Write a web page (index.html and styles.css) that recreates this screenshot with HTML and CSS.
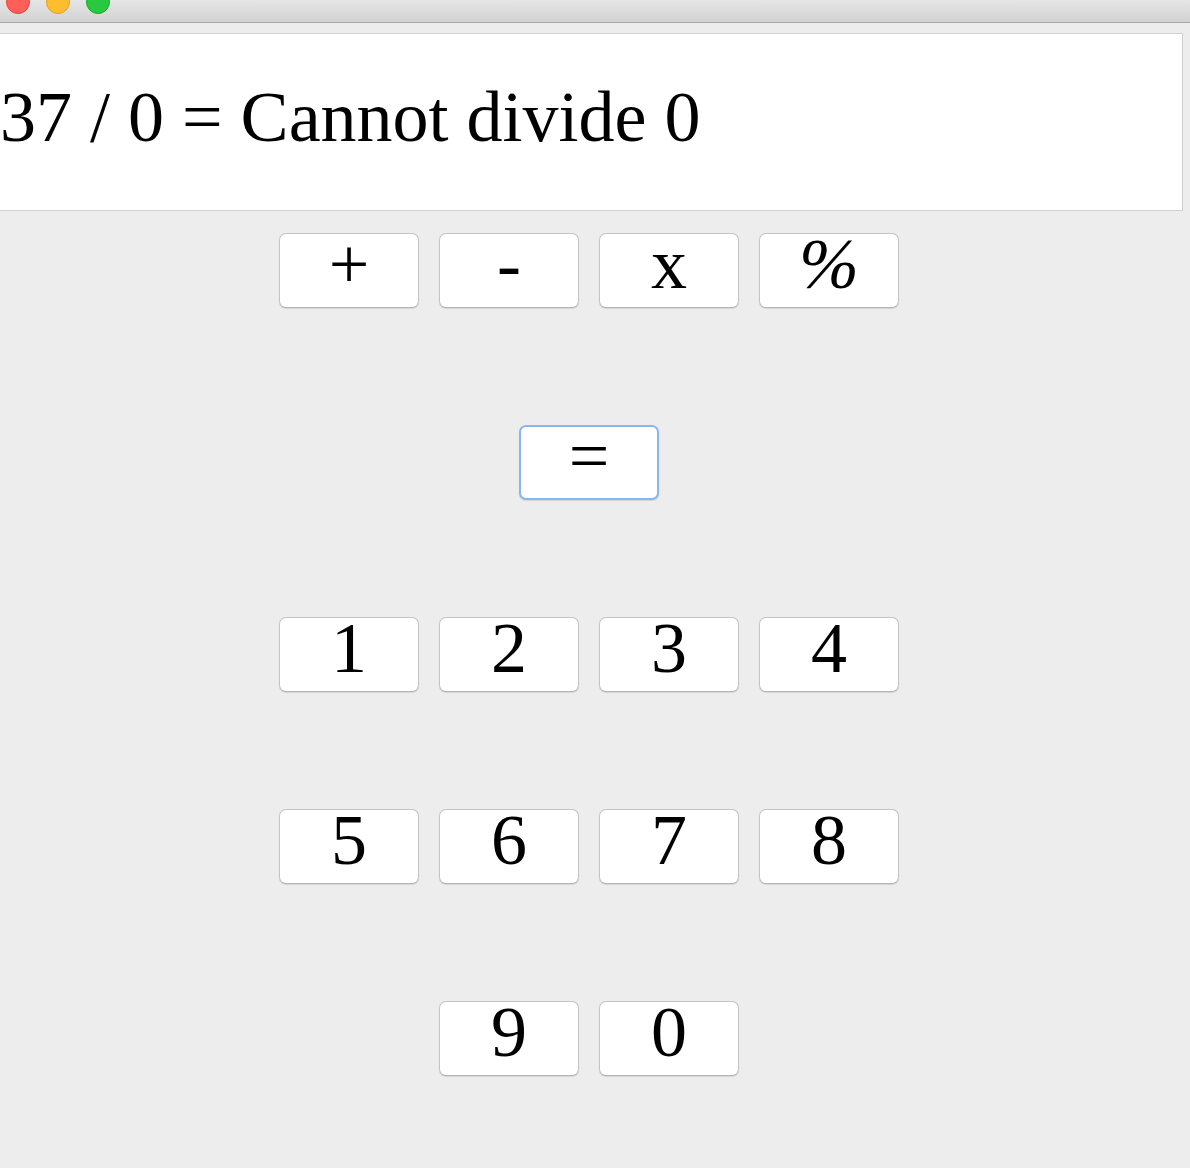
FILE: index.html
```html
<!DOCTYPE html>
<html>
<head>
<meta charset="utf-8">
<link rel="stylesheet" href="styles.css">
</head>
<body>
<div class="window">
  <div class="titlebar">
    <span class="light red"></span>
    <span class="light yellow"></span>
    <span class="light green"></span>
  </div>
  <div class="content">
    <div class="display">37 / 0 = Cannot divide 0</div>
    <div class="pad">
      <div class="row">
        <button class="key">+</button>
        <button class="key">-</button>
        <button class="key">x</button>
        <button class="key pct">%</button>
      </div>
      <div class="row">
        <button class="key focused">=</button>
      </div>
      <div class="row">
        <button class="key">1</button>
        <button class="key">2</button>
        <button class="key">3</button>
        <button class="key">4</button>
      </div>
      <div class="row">
        <button class="key">5</button>
        <button class="key">6</button>
        <button class="key">7</button>
        <button class="key">8</button>
      </div>
      <div class="row">
        <button class="key">9</button>
        <button class="key">0</button>
      </div>
    </div>
  </div>
</div>
</body>
</html>
```

FILE: styles.css
```css
html, body {
  margin: 0;
  padding: 0;
  background: #ededed;
  overflow: hidden;
}
.window {
  width: 1190px;
  height: 1168px;
  display: flex;
  flex-direction: column;
  background: #ededed;
  font-family: "Liberation Serif", "Times New Roman", serif;
}
.titlebar {
  height: 22px;
  border-bottom: 1px solid #a9a9a9;
  background: linear-gradient(#e5e5e5, #d2d2d2);
  display: flex;
  align-items: flex-start;
  gap: 16px;
  padding-left: 6px;
  overflow: hidden;
  flex-shrink: 0;
}
.light {
  width: 24px;
  height: 24px;
  border-radius: 50%;
  margin-top: -10px;
  box-sizing: border-box;
  flex-shrink: 0;
}
.red { background: #fe5f58; border: 1px solid #e2463f; }
.yellow { background: #febc2f; border: 1px solid #dea123; }
.green { background: #29c840; border: 1px solid #1aab29; }
.content {
  padding-top: 10px;
  display: flex;
  flex-direction: column;
}
.display {
  width: 1183px;
  height: 178px;
  box-sizing: border-box;
  background: #fff;
  border: 1px solid #d0d0d0;
  border-left: none;
  font-size: 72px;
  line-height: 72px;
  padding-top: 47px;
  padding-left: 0;
  color: #000;
  white-space: nowrap;
}
.pad {
  width: 1178px;
  padding-top: 22px;
  display: flex;
  flex-direction: column;
  gap: 117px;
}
.row {
  display: flex;
  justify-content: center;
  gap: 20px;
}
.key {
  width: 140px;
  height: 75px;
  box-sizing: border-box;
  background: #fff;
  border: 1px solid #c4c4c4;
  border-bottom-color: #b4b4b4;
  border-radius: 7px;
  box-shadow: 0 1px 1px rgba(0, 0, 0, 0.10);
  font-family: "Liberation Serif", "Times New Roman", serif;
  font-size: 72px;
  line-height: 60px;
  padding: 0;
  color: #000;
  display: flex;
  justify-content: center;
  align-items: flex-start;
}
.pct {
  font-style: italic;
}
.key.focused {
  border: 2px solid #88b7ee;
  line-height: 58px;
}
```
